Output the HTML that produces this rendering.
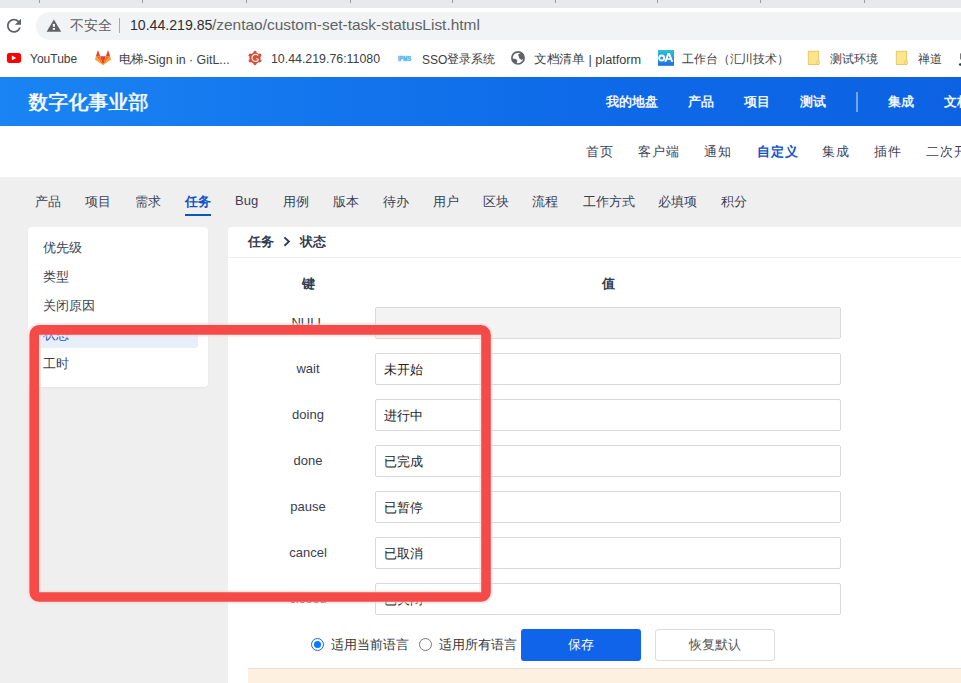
<!DOCTYPE html>
<html><head><meta charset="utf-8">
<style>
*{box-sizing:border-box;margin:0;padding:0}
html,body{width:961px;height:683px;overflow:hidden;background:#efefef;font-family:"Liberation Sans",sans-serif;color:#333}
.a{position:absolute;white-space:nowrap}
.tw{}
.up{position:relative;top:-1px}
.sx{transform-origin:0 0}
#tabs{position:absolute;left:0;top:0;width:961px;height:8px;background:#e8e9ed}
#tabs i{position:absolute;top:0;width:1px;height:3px;background:#9a9ca0}
#toolbar{position:absolute;left:0;top:8px;width:961px;height:34px;background:#fff}
#omni{position:absolute;left:36px;top:12px;width:940px;height:28px;border-radius:14px;background:#f1f3f4}
#bm{position:absolute;left:0;top:42px;width:961px;height:35px;background:#fff}
.bmt{font-size:12px;color:#3c4043;top:51.5px}
#hdr{position:absolute;left:0;top:77px;width:961px;height:49px;background:linear-gradient(90deg,#1a84f3 0%,#0e6ae8 60%,#0c62e2 100%)}
.hn{font-size:13px;color:#eef4ff;top:93px;font-weight:bold}
#sub{position:absolute;left:0;top:126px;width:961px;height:51px;background:#fff}
.sn{font-size:13px;color:#3a3f55;top:143px;letter-spacing:1px}
.mt{font-size:13px;color:#3a3f55;top:193px}
#side{position:absolute;left:28px;top:227px;width:180px;height:160px;background:#fff;border-radius:4px;box-shadow:0 1px 2px rgba(0,0,0,.05)}
.si{font-size:13px;color:#3a3f55;left:43px;margin-top:-1px}
#main{position:absolute;left:228px;top:227px;width:800px;height:500px;background:#fff;border-radius:4px}
.inp{position:absolute;left:375px;width:466px;height:32px;border:1px solid #d9d9d9;border-radius:2px;background:#fff;font-size:13px;color:#222;padding-left:8px;line-height:32.5px}
.key{font-size:13px;color:#3a3d4e;width:120px;text-align:center;left:248px;margin-top:1px}
</style></head><body>
<div id="tabs"><i style="left:39px"></i><i style="left:142px"></i><i style="left:246px"></i><i style="left:350px"></i><i style="left:452px"></i><i style="left:555px"></i><i style="left:657px"></i><i style="left:760px"></i><i style="left:864px"></i></div>
<div id="toolbar"></div>
<div id="omni"></div>
<svg class="a" style="left:0;top:8px" width="80" height="34" viewBox="0 8 80 34">
 <g transform="translate(3.5,15.2) scale(0.875)" fill="#5f6368"><path d="M17.65 6.35C16.2 4.9 14.21 4 12 4c-4.42 0-7.99 3.58-7.99 8s3.57 8 7.99 8c3.73 0 6.84-2.55 7.730-6h-2.08c-.82 2.33-3.04 4-5.65 4-3.31 0-6-2.690-6-6s2.69-6 6-6c1.66 0 3.140.69 4.22 1.78L13 11h7V4l-2.35 2.35z"/></g>
 <path d="M46.6 31.8 L53.9 19.4 L61.2 31.8 Z" fill="#5f6368"/><rect x="52.8" y="23.9" width="2.2" height="2.9" fill="#f1f3f4"/><rect x="52.8" y="28" width="2.2" height="1.9" fill="#f1f3f4"/>
</svg>
<div class="a" style="left:70px;top:17px;font-size:14px;color:#5f6368">不安全</div>
<div class="a" style="left:119px;top:18px;width:1px;height:15px;background:#aaa"></div>
<div class="a sx" style="left:130px;top:16px;font-size:15px;color:#2e2f33;transform:scaleX(0.94)">10.44.219.85</div>
<div class="a sx" style="left:212px;top:16px;font-size:15px;color:#5f6368;transform:scaleX(1.03)">/zentao/custom-set-task-statusList.html</div>
<div id="bm"></div>
<svg class="a" style="left:0;top:42px" width="961" height="35" viewBox="0 42 961 35">
 <rect x="6.9" y="52.9" width="14.2" height="10" rx="2.6" fill="#f00"/>
 <path d="M11.9 55.5 L16.2 57.9 L11.9 60.3 Z" fill="#fff"/>
 <g transform="translate(95,50.6) scale(0.0762)">
  <path d="M105.06 193.66 L143.74 74.62 H66.39 Z" fill="#e24329"/>
  <path d="M105.06 193.66 L66.39 74.62 H12.18 Z" fill="#fc6d26"/>
  <path d="M12.18 74.62 L0.43 110.8 a8 8 0 0 0 2.91 8.95 L105.06 193.66 Z" fill="#fca326"/>
  <path d="M12.18 74.62 H66.39 L43.09 2.92 a4 4 0 0 0 -7.6 0 Z" fill="#e24329"/>
  <path d="M105.06 193.66 L143.74 74.62 H197.94 Z" fill="#fc6d26"/>
  <path d="M197.94 74.62 L209.69 110.8 a8 8 0 0 1 -2.91 8.95 L105.06 193.66 Z" fill="#fca326"/>
  <path d="M197.94 74.62 H143.74 L167.03 2.92 a4 4 0 0 1 7.6 0 Z" fill="#e24329"/>
 </g>
 <g fill="#d4503a"><circle cx="255" cy="58" r="5.6"/><circle cx="255" cy="52.4" r="1.6"/><circle cx="255" cy="63.6" r="1.6"/><circle cx="250.2" cy="55.2" r="1.6"/><circle cx="259.8" cy="55.2" r="1.6"/><circle cx="250.2" cy="60.8" r="1.6"/><circle cx="259.8" cy="60.8" r="1.6"/></g>
 <path d="M258.2 55.6 A3.5 3.5 0 1 0 258.6 59.6" fill="none" stroke="#fbe3dc" stroke-width="1.2"/>
 <path d="M258.6 59.6 L256.2 58.6" stroke="#fbe3dc" stroke-width="1.1"/>
 <text x="398" y="60.6" font-family="Liberation Sans" font-weight="bold" font-size="7.4" fill="#55b6ef" textLength="13.2" lengthAdjust="spacingAndGlyphs" stroke="#55b6ef" stroke-width="0.5">IPMS</text>
 <circle cx="518" cy="57.9" r="6.1" fill="none" stroke="#5f6368" stroke-width="1.7"/>
 <path d="M518 54.5 L521 53 L523.8 55 L524 58.5 L521.5 60 L519.5 58.5 Z" fill="#5f6368"/>
 <path d="M512 58.5 L516 59 L517.5 61 L516 64 L513 62 Z" fill="#5f6368"/>
 <defs><linearGradient id="oag" x1="0" y1="0" x2="0" y2="1"><stop offset="0" stop-color="#2cc3d6"/><stop offset="1" stop-color="#1e6fe0"/></linearGradient></defs>
 <rect x="658" y="50" width="16" height="15.8" fill="url(#oag)"/>
 <circle cx="661.7" cy="58" r="2.5" fill="none" stroke="#fff" stroke-width="1.8"/>
 <path d="M664.3 61.7 L667.6 53 L669.9 53 L673.2 61.7 L671.1 61.7 L670.4 59.8 L667.1 59.8 L666.4 61.7 Z" fill="#fff"/>
 <path d="M667.8 58.3 L668.75 55.6 L669.7 58.3 Z" fill="#2a8ede"/>
 <rect x="808.3" y="51.3" width="10.3" height="13.2" fill="#fde58a" stroke="#e3c466" stroke-width="0.9"/>
 <rect x="817" y="60.3" width="2.3" height="4.2" rx="1" fill="#fde58a" stroke="#e3c466" stroke-width="0.8"/>
 <rect x="896.3" y="51.3" width="10.3" height="13.2" fill="#fde58a" stroke="#e3c466" stroke-width="0.9"/>
 <rect x="905" y="60.3" width="2.3" height="4.2" rx="1" fill="#fde58a" stroke="#e3c466" stroke-width="0.8"/>
 <rect x="960" y="53.4" width="1" height="6" fill="#777"/><ellipse cx="960.5" cy="64.5" rx="1.6" ry="1.3" fill="#2b3d4a"/>
</svg>
<div class="a bmt" style="left:30px">YouTube</div>
<div class="a bmt sx" style="left:119px;transform:scaleX(1.03)"><span class="up">电梯</span>-Sign in · GitL...</div>
<div class="a bmt sx" style="left:271px;transform:scaleX(1.03)">10.44.219.76:11080</div>
<div class="a bmt" style="left:422px">SSO<span class="up">登录系统</span></div>
<div class="a bmt sx" style="left:534px;transform:scaleX(1.06)"><span class="up">文档清单</span> | platform</div>
<div class="a bmt sx" style="left:682px;transform:scaleX(0.99)"><span class="up">工作台（汇川技术）</span></div>
<div class="a bmt" style="left:830px"><span class="up">测试环境</span></div>
<div class="a bmt" style="left:918px"><span class="up">禅道</span></div>

<div id="hdr"></div>
<div class="a" style="left:28px;top:89px;font-size:20px;color:#fff;text-shadow:0.5px 0 0 rgba(255,255,255,.8)">数字化事业部</div>
<div class="a hn" style="left:606px">我的地盘</div>
<div class="a hn" style="left:688px">产品</div>
<div class="a hn" style="left:744px">项目</div>
<div class="a hn" style="left:800px">测试</div>
<div class="a" style="left:856px;top:92px;width:2px;height:20px;background:rgba(255,255,255,.42)"></div>
<div class="a hn" style="left:888px">集成</div>
<div class="a hn" style="left:944px">文档</div>

<div id="sub"></div>
<div class="a sn tw" style="left:586px">首页</div>
<div class="a sn tw" style="left:638px">客户端</div>
<div class="a sn tw" style="left:704px">通知</div>
<div class="a sn tw" style="left:757px;color:#1252c9;font-weight:bold">自定义</div>
<div class="a sn tw" style="left:822px">集成</div>
<div class="a sn tw" style="left:874px">插件</div>
<div class="a sn tw" style="left:926px">二次开发</div>

<div class="a mt tw" style="left:35px">产品</div>
<div class="a mt tw" style="left:85px">项目</div>
<div class="a mt tw" style="left:135px">需求</div>
<div class="a mt tw" style="left:185px;color:#1252c9;font-weight:bold">任务</div>
<div class="a" style="left:185px;top:214px;width:26px;height:2px;background:#0d52c6"></div>
<div class="a mt tw" style="left:235px">Bug</div>
<div class="a mt tw" style="left:283px">用例</div>
<div class="a mt tw" style="left:333px">版本</div>
<div class="a mt tw" style="left:383px">待办</div>
<div class="a mt tw" style="left:433px">用户</div>
<div class="a mt tw" style="left:483px">区块</div>
<div class="a mt tw" style="left:532px">流程</div>
<div class="a mt tw" style="left:583px">工作方式</div>
<div class="a mt tw" style="left:658px">必填项</div>
<div class="a mt tw" style="left:721px">积分</div>

<div id="side"></div>
<div class="a si tw" style="top:240px">优先级</div>
<div class="a si tw" style="top:269px">类型</div>
<div class="a si tw" style="top:298px">关闭原因</div>
<div class="a" style="left:35px;top:325px;width:163px;height:23px;background:#e6effa;border-radius:3px"></div>
<div class="a si tw" style="top:327px;color:#1e52c0">状态</div>
<div class="a si tw" style="top:356px">工时</div>

<div id="main"></div>
<div class="a" style="left:248px;top:233px;font-size:13px;font-weight:bold;color:#313c52">任务</div>
<svg class="a" style="left:282px;top:236px" width="10" height="12"><path d="M2.4 1.4 L6.9 5.6 L2.4 9.8" fill="none" stroke="#313c52" stroke-width="1.9"/></svg>
<div class="a" style="left:300px;top:233px;font-size:13px;font-weight:bold;color:#313c52">状态</div>
<div class="a" style="left:228px;top:257px;width:733px;height:1px;background:#eee"></div>
<div class="a" style="left:248px;top:275px;width:120px;text-align:center;font-size:13px;font-weight:bold;color:#313c52">键</div>
<div class="a" style="left:548px;top:275px;width:120px;text-align:center;font-size:13px;font-weight:bold;color:#313c52">值</div>

<div class="a key" style="top:314px">NULL</div>
<div class="inp tw" style="top:307px;background:#f3f3f3"></div>
<div class="a key" style="top:360px">wait</div>
<div class="inp tw" style="top:353px">未开始</div>
<div class="a key" style="top:406px">doing</div>
<div class="inp tw" style="top:399px">进行中</div>
<div class="a key" style="top:452px">done</div>
<div class="inp tw" style="top:445px">已完成</div>
<div class="a key" style="top:498px">pause</div>
<div class="inp tw" style="top:491px">已暂停</div>
<div class="a key" style="top:544px">cancel</div>
<div class="inp tw" style="top:537px">已取消</div>
<div class="a key" style="top:590px">closed</div>
<div class="inp tw" style="top:583px">已关闭</div>

<div class="a" style="left:311px;top:638px;width:13px;height:13px;border-radius:50%;border:1.4px solid #2468d0;background:#f4fbff"></div>
<div class="a" style="left:314px;top:641px;width:7px;height:7px;border-radius:50%;background:#0a78ff"></div>
<div class="a" style="left:331px;top:636px;font-size:13px;color:#333">适用当前语言</div>
<div class="a" style="left:419px;top:638px;width:13px;height:13px;border-radius:50%;border:1.2px solid #777;background:#fff"></div>
<div class="a" style="left:439px;top:636px;font-size:13px;color:#333">适用所有语言</div>
<div class="a" style="left:521px;top:629px;width:120px;height:32px;background:#1064e9;border-radius:3px;color:#fff;font-size:13px;text-align:center;line-height:32px">保存</div>
<div class="a" style="left:655px;top:629px;width:120px;height:32px;background:#fff;border:1px solid #dcdcdc;border-radius:3px;color:#555;font-size:13px;text-align:center;line-height:30px">恢复默认</div>
<div class="a" style="left:248px;top:668px;width:713px;height:20px;background:#fdf0e0;border-top:1px solid #e8ddd2"></div>

<svg class="a" style="left:0;top:0" width="961" height="683"><rect x="34.2" y="329.9" width="451.8" height="267.1" rx="4.8" fill="none" stroke="#ffd6d6" stroke-opacity="0.5" stroke-width="13.6"/><rect x="34.2" y="329.9" width="451.8" height="267.1" rx="4.8" fill="none" stroke="#f44b48" stroke-width="9.6"/></svg>
</body></html>
